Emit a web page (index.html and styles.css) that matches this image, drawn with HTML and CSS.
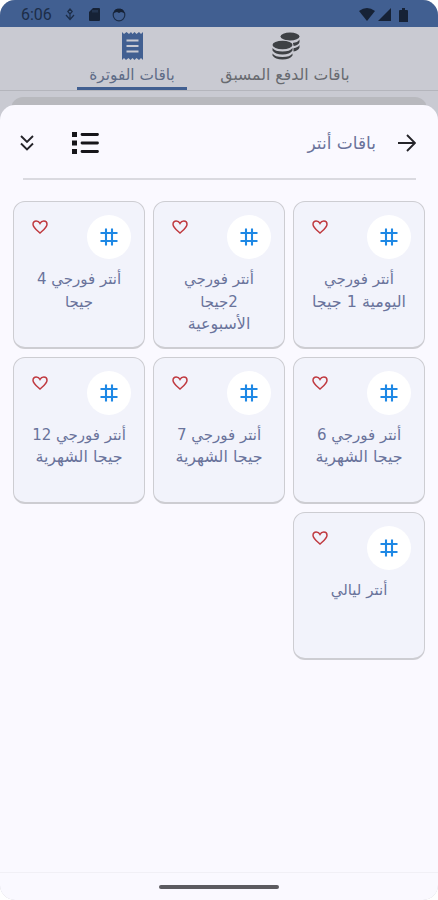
FILE: index.html
```html
<!DOCTYPE html>
<html lang="ar" dir="rtl">
<head>
<meta charset="utf-8">
<title>باقات أنتر</title>
<link rel="stylesheet" href="styles.css">
</head>
<body>
<svg class="defs" width="0" height="0" aria-hidden="true">
  <symbol id="heart" viewBox="0 0 16 14"><path d="M8 13C6.300 11.200 1 7.800 1 4.200C1 2.200 2.400 1 4.200 1C6 1 7.300 2 8 3.300C8.700 2 10 1 11.800 1C13.600 1 15 2.200 15 4.200C15 7.800 9.700 11.200 8 13Z" fill="none" stroke="#c03a40" stroke-width="1.500"/></symbol>
  <symbol id="hash" viewBox="0 0 18 18"><path d="M6 0.500V17.500M12 0.500V17.500M0.500 5H17.500M0.500 13H17.500" fill="none" stroke="#1e88e5" stroke-width="2.100"/></symbol>
</svg>
<div class="phone">
  <div class="status" dir="ltr">
    <span class="clock">6:06</span>
    <svg class="s-down" viewBox="0 0 10 13"><path d="M5 1L2.800 3.500L5 6L7.200 3.500ZM5 6V11M1 7L5 11.500L9 7" fill="none" stroke="#1c2d48" stroke-width="1.200"/></svg>
    <svg class="s-card" viewBox="0 0 11 13"><path d="M4 0H10Q11 0 11 1V12Q11 13 10 13H1Q0 13 0 12V4Z" fill="#162236"/><path d="M4 2V4.500M6 2V4.500M8 2V4.500" stroke="#385277" stroke-width=".8"/></svg>
    <svg class="s-face" viewBox="0 0 14 14"><circle cx="7" cy="7" r="5.800" fill="none" stroke="#1c2d48" stroke-width="1.200"/><path d="M1.500 5Q3 0 7 1Q11 0 12.500 5L9 4L7 5L5 4Z" fill="#162236"/></svg>
    <span class="fill"></span>
    <svg class="s-wifi" viewBox="0 0 16 13"><path d="M0 3Q8 -3 16 3L8 13Z" fill="#162236"/></svg>
    <svg class="s-signal" viewBox="0 0 13 13"><path d="M13 0V13H0Z" fill="#162236"/></svg>
    <svg class="s-battery" viewBox="0 0 9 14"><path d="M3 0H6V2H8Q9 2 9 3V14H0V3Q0 2 1 2H3Z" fill="#162236"/></svg>
  </div>
  <div class="tabs">
    <div class="tab prepaid">
      <svg class="coins" viewBox="0 0 28 28"><g fill="#3e4145"><ellipse cx="18" cy="4.500" rx="9.500" ry="4"/><path d="M20.500 11Q26 10.500 27.500 7.500V10Q27 13 21.500 14ZM21.500 16.200Q26 15.500 27.500 13V15.500Q26.500 18.500 21.500 19.500Z"/></g><ellipse cx="10.500" cy="13" rx="11" ry="5.300" fill="#c9cad2"/><g fill="#3e4145"><ellipse cx="10.500" cy="13" rx="10" ry="4.200"/><path d="M.5 16Q3 19.500 10.500 19.500Q18 19.500 20.500 16V18.500Q18 22.500 10.500 22.500Q3 22.500 .5 18.500ZM.5 21.500Q3 25 10.500 25Q18 25 20.500 21.500V23.500Q18 27.500 10.500 27.500Q3 27.500 .5 23.500Z"/></g></svg>
      <span class="label">باقات الدفع المسبق</span>
    </div>
    <div class="tab billing">
      <svg class="receipt" viewBox="0 0 21 28"><path d="M0 0L2 2L4.500 0L7 2L9 0L10.500 2L12.500 0L14.500 2L17 0L19 2L21 0V28L19 26L17 28L14.500 26L12.500 28L10.500 26L8.500 28L6.500 26L4 28L2 26L0 28Z" fill="#415f91"/><path d="M4.500 8.500H16.500M4.500 14H16.500M4.500 19.500H16.500" stroke="#c9cad2" stroke-width="2"/></svg>
      <span class="label">باقات الفوترة</span>
    </div>
  </div>
  <div class="backdrop"></div>
  <main class="sheet">
    <header class="head">
      <svg class="arrow" viewBox="0 0 18 18"><path d="M0 9H16.500M9 1L17 9L9 17" fill="none" stroke="#242429" stroke-width="1.900"/></svg>
      <h1>باقات أنتر</h1>
      <span class="fill"></span>
      <svg class="list" viewBox="0 0 27 22"><path d="M0 0H5V5H0ZM0 8.500H5V13.500H0ZM0 17H5V22H0Z" fill="#16161a"/><path d="M10 2.500H25.500M10 11H25.500M10 19.500H25.500" stroke="#16161a" stroke-width="2.800" stroke-linecap="round"/></svg>
      <svg class="chev" viewBox="0 0 14 16"><path d="M1 1L7 7L13 1M1 8.500L7 14.500L13 8.500" fill="none" stroke="#242429" stroke-width="1.900"/></svg>
    </header>
    <section class="grid">
      <article class="card"><div class="top"><span class="badge"><svg><use href="#hash"/></svg></span><svg class="heart"><use href="#heart"/></svg></div><p>أنتر فورجي<br><span class="wide">اليومية 1 جيجا</span></p></article>
      <article class="card"><div class="top"><span class="badge"><svg><use href="#hash"/></svg></span><svg class="heart"><use href="#heart"/></svg></div><p>أنتر فورجي<br>2جيجا<br><span class="wide">الأسبوعية</span></p></article>
      <article class="card"><div class="top"><span class="badge"><svg><use href="#hash"/></svg></span><svg class="heart"><use href="#heart"/></svg></div><p>أنتر فورجي 4<br>جيجا</p></article>
      <article class="card"><div class="top"><span class="badge"><svg><use href="#hash"/></svg></span><svg class="heart"><use href="#heart"/></svg></div><p>أنتر فورجي 6<br><span class="wide">جيجا الشهرية</span></p></article>
      <article class="card"><div class="top"><span class="badge"><svg><use href="#hash"/></svg></span><svg class="heart"><use href="#heart"/></svg></div><p>أنتر فورجي 7<br><span class="wide">جيجا الشهرية</span></p></article>
      <article class="card"><div class="top"><span class="badge"><svg><use href="#hash"/></svg></span><svg class="heart"><use href="#heart"/></svg></div><p>أنتر فورجي 12<br><span class="wide">جيجا الشهرية</span></p></article>
      <article class="card"><div class="top"><span class="badge"><svg><use href="#hash"/></svg></span><svg class="heart"><use href="#heart"/></svg></div><p>أنتر ليالي</p></article>
    </section>
    <footer class="nav"><span class="pill"></span></footer>
  </main>
</div>
</body>
</html>
```
FILE: styles.css
```css
* { box-sizing: border-box; }
html, body { margin: 0; background: #fff; }
body { font-family: "DejaVu Sans", sans-serif; color: #6a739b; }
svg { display: block; flex: none; }
.defs { position: absolute; }
.phone { width: 438px; height: 900px; display: flex; flex-direction: column; overflow: hidden; border-radius: 15px; background: #c9cad2; }
.fill { flex: 1; }

.status { height: 27px; flex: none; display: flex; align-items: center; padding: 2px 30px 0 21px; background: #415f91; }
.clock { width: 30px; font: 16px/20px Roboto, sans-serif; color: #1c2d48; }
.s-down { width: 10px; height: 13px; margin-left: 14px; }
.s-card { width: 11px; height: 13px; margin-left: 14px; }
.s-face { width: 14px; height: 14px; margin-left: 12px; }
.s-wifi { width: 16px; height: 13px; }
.s-signal { width: 13px; height: 13px; margin-left: 3px; }
.s-battery { width: 9px; height: 14px; margin-left: 8px; }

.tabs { height: 64px; flex: none; display: flex; padding: 0 79px 0 77px; border-bottom: 1px solid #b4b5bc; }
.tab { display: flex; flex-direction: column; align-items: center; padding-top: 5px; }
.prepaid { width: 150px; color: #686a70; margin: 0 -1px 0 23px; }
.prepaid .label { font-size: 15.700px; }
.billing { width: 110px; color: #5e6c87; border-bottom: 3px solid #415f91; border-radius: 2px 2px 0 0; }
.coins { width: 28px; height: 28px; margin-right: -2px; }
.receipt { width: 21px; height: 28px; }
.label { font-size: 15.300px; line-height: 24px; margin-top: 3px; white-space: nowrap; }

.backdrop { height: 30px; flex: none; margin: 6px 11px -22px; border-radius: 12px 12px 0 0; background: #b8b9be; }
.sheet { flex: 1; display: flex; flex-direction: column; border-radius: 15px 15px 0 0; background: #faf9ff; position: relative; }
.head { height: 75px; flex: none; display: flex; align-items: center; margin: 0 22px 0 23px; border-bottom: 2px solid #dadae0; padding-top: 3px; }
.arrow { width: 18px; height: 18px; }
h1 { margin: 0 22px 0 0; font-size: 17px; line-height: 26px; font-weight: 400; }
.list { width: 27px; height: 22px; }
.chev { width: 14px; height: 16px; margin: 0 38px 0 -3px; }

.grid { display: grid; grid-template-columns: repeat(3, 132px); grid-auto-rows: 147.500px; gap: 8px; padding: 21px 13px 0; }
.card { border: 1px solid #cdcdd2; border-bottom-width: 2px; border-radius: 12px; background: #f2f3fb; }
.top { display: flex; justify-content: space-between; padding: 13px 13px 0 18px; }
.badge { width: 44px; height: 44px; border-radius: 50%; background: #fff; display: flex; align-items: center; justify-content: center; }
.badge svg { width: 18px; height: 18px; }
.heart { width: 16px; height: 14px; margin-top: 5px; }
.card p { margin: 9px 0 0; text-align: center; font-size: 15px; line-height: 22.500px; white-space: nowrap; }
.wide { font-size: 15.900px; line-height: 1; }

.nav { height: 28px; margin-top: auto; display: flex; justify-content: center; align-items: center; border-top: 1px solid #f1f0f6; }
.pill { width: 120px; height: 4px; border-radius: 2px; background: #5c5b60; }
```
